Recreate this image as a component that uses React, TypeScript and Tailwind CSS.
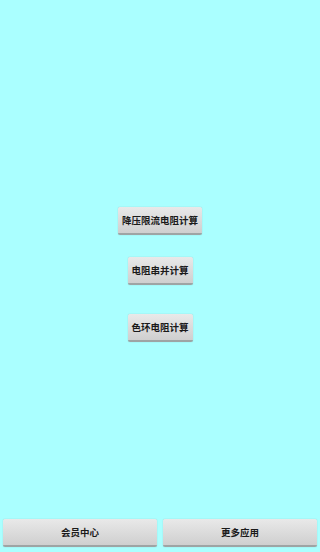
import React from "react";

const font = { fontFamily: '"Noto Sans CJK SC", "Noto Sans", sans-serif' };

function GrayButton({ label, className = "" }: { label: string; className?: string }) {
  return (
    <button
      className={`h-[28px] flex items-center justify-center rounded-[2px] bg-gradient-to-b from-[#e9e9e9] to-[#cfcfcf] border-b-2 border-[#9ea4a4] shadow-[0_0_1px_rgba(0,0,0,0.3)] text-[9.5px] font-bold text-[#1a1a1a] ${className}`}
    >
      {label}
    </button>
  );
}

export default function App() {
  return (
    <div className="h-[552px] w-[320px] bg-[#aaffff] flex flex-col" style={font}>
      <div className="flex-1 flex flex-col items-center pt-[207px]">
        <GrayButton label="降压限流电阻计算" className="w-[84px]" />
        <GrayButton label="电阻串并计算" className="w-[65px] mt-[22px]" />
        <GrayButton label="色环电阻计算" className="w-[65px] mt-[29px]" />
      </div>
      <div className="flex gap-[6px] px-[3px] pb-[5px]">
        <GrayButton label="会员中心" className="flex-1" />
        <GrayButton label="更多应用" className="flex-1" />
      </div>
    </div>
  );
}
